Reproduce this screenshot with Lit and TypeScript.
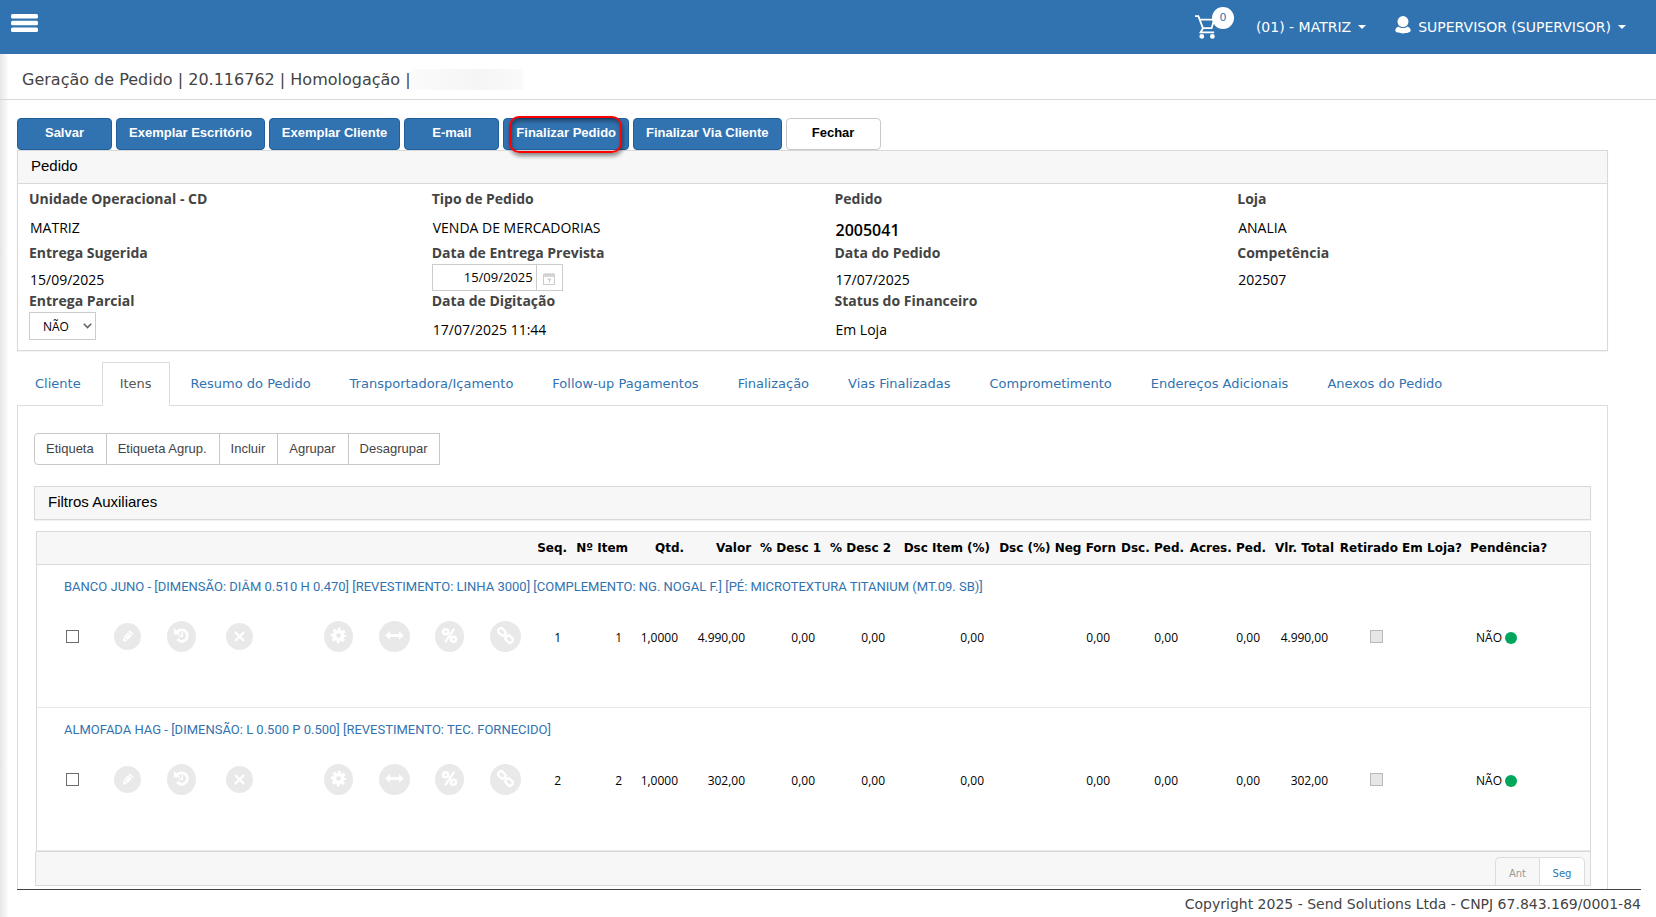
import { LitElement, html, css, svg, nothing } from "lit";
import { customElement } from "lit/decorators.js";
import { classMap } from "lit/directives/class-map.js";

const ACTIONS = [
  { label: "Salvar" },
  { label: "Exemplar Escritório" },
  { label: "Exemplar Cliente" },
  { label: "E-mail" },
  { label: "Finalizar Pedido", ring: true },
  { label: "Finalizar Via Cliente" },
  { label: "Fechar", plain: true },
];

const TABS = [
  "Cliente", "Itens", "Resumo do Pedido", "Transportadora/Içamento", "Follow-up Pagamentos",
  "Finalização", "Vias Finalizadas", "Comprometimento", "Endereços Adicionais", "Anexos do Pedido",
];

const TOOLS = ["Etiqueta", "Etiqueta Agrup.", "Incluir", "Agrupar", "Desagrupar"];

const HEADERS = [
  "Seq.", "Nº Item", "Qtd.", "Valor", "% Desc 1", "% Desc 2", "Dsc Item (%)",
  "Dsc (%) Neg Forn", "Dsc. Ped.", "Acres. Ped.", "Vlr. Total", "Retirado Em Loja?",
];

const ITEMS = [
  {
    title: "BANCO JUNO - [DIMENSÃO: DIÂM 0.510 H 0.470] [REVESTIMENTO: LINHA 3000] [COMPLEMENTO: NG. NOGAL F.] [PÉ: MICROTEXTURA TITANIUM (MT.09. SB)]",
    cells: ["1", "1", "1,0000", "4.990,00", "0,00", "0,00", "0,00", "0,00", "0,00", "0,00", "4.990,00"],
    pending: "NÃO",
  },
  {
    title: "ALMOFADA HAG - [DIMENSÃO: L 0.500 P 0.500] [REVESTIMENTO: TEC. FORNECIDO]",
    cells: ["2", "2", "1,0000", "302,00", "0,00", "0,00", "0,00", "0,00", "0,00", "0,00", "302,00"],
    pending: "NÃO",
  },
];

const COLUMN_WIDTHS = [63, 55, 53, 63, 34, 66, 47, 62, 50, 41, 61, 56, 67, 70, 70, 99, 126, 68, 82, 68, 128];

const GLYPHS = {
  edit: svg`<g transform="rotate(42 10 10)"><path d="M6.600 1.800h6.800v2.600H6.600zM6.600 5.400h6.800v8H6.600z" fill="#fff"/><path d="M6.600 14.400h6.800L10 19z" fill="#fff"/><path d="M9 6.400v6" stroke="#e9e9e9"/></g>`,
  history: svg`<path d="M5.2 5.6A6.7 6.7 0 1 1 5 14.400" fill="none" stroke="#fff" stroke-width="3.200"/><path d="M1 1v7.800h7.800z" fill="#fff"/><path d="M10.800 6v5H7" fill="none" stroke="#fff" stroke-width="1.800"/>`,
  remove: svg`<path d="M4 4l12 12M16 4l-12 12" stroke="#fff" stroke-width="3"/>`,
  gear: svg`<circle cx="10" cy="10" r="4.800" fill="none" stroke="#fff" stroke-width="4.200"/><circle cx="10" cy="10" r="7.600" fill="none" stroke="#fff" stroke-width="3" stroke-dasharray="3.370 2.600" stroke-dashoffset="1.680"/>`,
  width: svg`<path d="M4 10h12" stroke="#fff" stroke-width="3"/><path d="M.2 10l5-4.600v9.200zM19.800 10l-5-4.600v9.200z" fill="#fff"/>`,
  percent: svg`<circle cx="5.400" cy="5.600" r="3" fill="none" stroke="#fff" stroke-width="3"/><circle cx="14.600" cy="14.400" r="3" fill="none" stroke="#fff" stroke-width="3"/><path d="M15.600 2L4.800 18" stroke="#fff" stroke-width="2.600"/>`,
  link: svg`<g fill="none" stroke="#fff" stroke-width="2.800"><rect x="-4.400" y="-3.200" width="8.800" height="6.400" rx="2.400" transform="translate(5.700 5.700) rotate(45)"/><rect x="-4.400" y="-3.200" width="8.800" height="6.400" rx="2.400" transform="translate(14.300 14.300) rotate(45)"/><path d="M8 8l4 4"/></g>`,
};

const ROW_BUTTONS: { id: keyof typeof GLYPHS | null; label?: string; size?: string }[] = [
  { id: "edit", label: "Editar", size: "small" },
  { id: "history", label: "Histórico", size: "medium" },
  { id: "remove", label: "Excluir", size: "small" },
  { id: null },
  { id: "gear", label: "Configurar", size: "medium" },
  { id: "width", label: "Medidas", size: "large" },
  { id: "percent", label: "Desconto", size: "medium" },
  { id: "link", label: "Vincular", size: "large" },
];

@customElement("app-root")
class AppRoot extends LitElement {
  static styles = css`
    :host {
      display: flex;
      flex-direction: column;
      min-height: 100vh;
      box-sizing: border-box;
      background: #fff;
      color: #444;
      font-family: "DejaVu Sans", Verdana, sans-serif;
      font-size: 13px;
    }
    *, *::before, *::after { box-sizing: border-box; }
    button, input, select { font: inherit; margin: 0; }
    a { text-decoration: none; color: #3173b0; }
    svg { display: block; }

    .topbar {
      display: flex;
      align-items: center;
      height: 54px;
      padding: 0 30px 1px 11px;
      background: #3173b0;
      color: #fff;
      font-size: 14px;
    }
    .menu { padding: 0; border: 0; background: none; margin: 0 auto 7px 0; cursor: pointer; }
    .cart { position: relative; display: block; padding: 0; border: 0; background: none; margin-right: 40px; }
    .count {
      position: absolute; left: 17px; top: -8px; width: 22px; height: 22px; border-radius: 50%;
      background: #fff; color: #3173b0; font-size: 11px; line-height: 21px; text-align: center;
    }
    .drop {
      display: flex; align-items: center; gap: 7px; padding: 0; border: 0; background: none; color: #fff;
      margin-left: 29px;
    }
    .drop.first { margin-left: 0; }
    .caret { border: 4px solid transparent; border-top-color: #fff; border-bottom: 0; }

    .body {
      flex: 1;
      display: flex;
      flex-direction: column;
      background: linear-gradient(to right, #e6e6e6, #fff 9px);
    }
    .title {
      display: flex; align-items: center; height: 46px; padding: 6px 22px 0; margin: 0;
      border-bottom: 1px solid #d8d8d8; font-size: 16px; font-weight: 400; white-space: nowrap;
    }
    .redacted { width: 112px; height: 21px; background: linear-gradient(to right, #fbfbfb, #f5f5f5 60%, #fafafa); }

    .content { margin: 18px 48px 0 17px; }
    .actions { display: flex; gap: 4px; font: bold 13px/26px "Liberation Sans", Arial, sans-serif; }
    .action {
      position: relative; min-width: 95px; height: 32px; padding: 0 12px 3px; border: 1px solid #1f5f9c;
      border-radius: 4px; background: #3173b0; color: #fff;
    }
    .action.plain { background: #fff; color: #000; border-color: #c8c8c8; }
    .ring {
      position: absolute; inset: -3px 6px -4px 5px; border: 2px solid #f00; border-radius: 10px;
      box-shadow: 1px 3px 4px rgba(0, 0, 0, .45), inset 1px 3px 4px rgba(0, 0, 0, .4);
    }

    .panel { border: 1px solid #d9d9d9; background: #fff; box-shadow: 0 1px 1px rgba(0, 0, 0, .05); }
    .heading {
      margin: 0; padding: 0 13px 2px; background: #f7f7f7; color: #000;
      font: 15px/30px "Liberation Sans", Arial, sans-serif;
    }
    .fields {
      display: grid; grid-template-columns: 403fr 403fr 403fr 370fr; padding: 5px 0 5px 11px;
      border-top: 1px solid #d9d9d9; font-family: "Open Sans", "Trebuchet MS", sans-serif; font-size: 14px;
    }
    .name { display: block; font-weight: 700; line-height: 19px; }
    .value { display: block; padding: 5px 0 0 1px; line-height: 30px; color: #000; }
    .value.low { padding-top: 7px; line-height: 22px; }
    .value.big { padding-top: 9px; font-size: 16px; font-weight: 600; line-height: 26px; }
    .date { display: flex; margin-top: 2px; }
    .date input {
      width: 105px; height: 27px; padding: 0 3px 2px; border: 1px solid #ccc; text-align: right; color: #000;
      font-size: 13px; background: #fff;
    }
    .pick {
      display: grid; place-items: center; width: 26px; height: 27px; padding: 3px 0 0;
      border: 1px solid #ccc; border-left: 0; background: #fff;
    }
    .choice { display: grid; width: 67px; height: 28px; margin-top: 2px; }
    .choice > * { grid-area: 1 / 1; }
    .choice select {
      appearance: none; padding: 0 13px; border: 1px solid #ccc; border-radius: 0; background: #fff;
      color: #000; font-size: 12px;
    }
    .choice svg { justify-self: end; align-self: center; margin-right: 4px; pointer-events: none; }

    .tabs { display: flex; gap: 3px; margin-top: 11px; }
    .tab {
      padding: 0 17px; line-height: 42px; border: 1px solid transparent; border-bottom: 0;
      white-space: nowrap;
    }
    .tab.active { border-color: #ddd; background: #fff; color: #555; margin-bottom: -1px; }
    .pane { border: 1px solid #ddd; border-bottom: 0; padding: 27px 16px 3px; }

    .tools { display: flex; font: 13px "Liberation Sans", Arial, sans-serif; }
    .tool {
      height: 32px; padding: 0 12px 1px 11px; border: 1px solid #c8c8c8; border-left-width: 0; background: #fff; color: #444;
    }
    .tool:first-child { border-left-width: 1px; border-radius: 4px 0 0 4px; }
    .filters { margin: 21px 0 11px; }

    .items {
      width: calc(100% - 2px); margin-left: 2px; table-layout: fixed; border-collapse: separate; border-spacing: 0;
      border: 1px solid #d9d9d9; color: #000; font: 12px "Open Sans", "Trebuchet MS", sans-serif;
    }
    .items th {
      height: 33px; padding: 0 4px 0 0; background: #f7f7f7; border-bottom: 1px solid #d9d9d9;
      font: bold 12px "DejaVu Sans", Verdana, sans-serif; text-align: right; white-space: nowrap;
    }
    .items th.last { padding-left: 4px; text-align: left; }
    .items td { padding: 0; }
    .items .name-cell { height: 43px; padding-left: 27px; font: 13px Roboto, "Trebuchet MS", sans-serif; }
    .items .cell { height: 100px; padding-bottom: 43px; text-align: center; white-space: nowrap; }
    .items .num { padding-right: 10px; padding-top: 3px; text-align: right; }
    .items .select { padding-left: 29px; text-align: left; }
    .items .taken { padding-left: 32px; text-align: left; }
    .items .pending { padding-left: 10px; padding-top: 3px; text-align: left; }
    .items .split { border-bottom: 1px solid #e8e8e8; }
    .check {
      appearance: none; display: block; width: 13px; height: 13px; border: 1px solid #6b6b6b; background: #fff;
    }
    .check:disabled { border-color: #b9b9b9; background: #e6e6e6; }
    .dot { display: inline-block; width: 12px; height: 12px; margin-left: 3px; border-radius: 50%; background: #00a65a; vertical-align: -2px; }
    .round { display: inline-grid; place-items: center; padding: 0; border: 0; border-radius: 50%; background: #e9e9e9; vertical-align: middle; }
    .small { width: 27px; height: 27px; }
    .medium { width: 29px; height: 31px; padding-bottom: 2px; }
    .large { width: 31px; height: 31px; padding-bottom: 2px; }

    .pager {
      display: flex; justify-content: flex-end; height: 34px; margin-left: 1px; padding: 5px 5px 0;
      overflow: hidden; border: 1px solid #d9d9d9; border-top: 0; background: #f7f7f7; font-size: 10px;
    }
    .page { height: 32px; width: 46px; padding: 0; border: 1px solid #ddd; background: #fff; color: #3173b0; }
    .page.off { border-radius: 5px 0 0 5px; border-right: 0; width: 44px; background: #f7f7f7; color: #999; }
    .page.next { border-radius: 0 5px 5px 0; }

    .footer {
      margin: 0 15px 0 17px; padding-top: 4px; border-top: 1px solid #444; font-size: 14px; line-height: 20px;
      text-align: right;
    }
  `;

  private roundButton(b: (typeof ROW_BUTTONS)[number]) {
    if (!b.id) return nothing;
    const side = b.id === "width" ? 19 : b.size === "small" ? 15 : 17;
    return html`<button class="round ${b.size}" aria-label=${b.label ?? ""} disabled>
      <svg width=${side} height=${side} viewBox="0 0 20 20">${GLYPHS[b.id]}</svg>
    </button>`;
  }

  private field(name: string, value: string, extra = "") {
    return html`<div><span class="name">${name}</span><span class="value ${extra}">${value}</span></div>`;
  }

  private itemRows(item: (typeof ITEMS)[number]) {
    return html`
      <tr><td class="name-cell" colspan="22"><a href="#item-${item.cells[0]}">${item.title}</a></td></tr>
      <tr>
        <td class="cell select split"><input class="check" type="checkbox" aria-label="Selecionar item ${item.cells[0]}" /></td>
        ${ROW_BUTTONS.map((b) => html`<td class="cell split">${this.roundButton(b)}</td>`)}
        ${item.cells.map((c) => html`<td class="cell num split">${c}</td>`)}
        <td class="cell taken split"><input class="check" type="checkbox" disabled aria-label="Retirado em loja" /></td>
        <td class="cell pending split">${item.pending}<span class="dot"></span></td>
      </tr>`;
  }

  render() {
    return html`
      <header class="topbar">
        <button class="menu" aria-label="Menu">
          <svg width="27" height="18" viewBox="0 0 27 18" fill="#fff">
            <rect width="27" height="4.4" rx="1.5" /><rect y="6.8" width="27" height="4.4" rx="1.5" /><rect y="13.6" width="27" height="4.4" rx="1.5" />
          </svg>
        </button>
        <button class="cart" aria-label="Carrinho">
          <svg width="21" height="24" viewBox="0 0 21 24" fill="none" stroke="#fff" stroke-width="1.8">
            <path d="M0 1.2h3.4L8 13.4M4.6 4.6h14.6l-2.6 8.6H8L5.6 17.4h13.6" />
            <circle cx="6.8" cy="21.4" r="1.5" fill="#fff" /><circle cx="17.4" cy="21.4" r="1.5" fill="#fff" />
          </svg>
          <span class="count">0</span>
        </button>
        <button class="drop first">(01) - MATRIZ <span class="caret"></span></button>
        <button class="drop">
          <svg width="16" height="21" viewBox="0 0 16 21" fill="#fff">
            <circle cx="8" cy="5.6" r="5.5" /><path d="M.3 14.6c0-2 1.4-3.4 3.2-4.1 2.4 2.1 6.6 2.1 9 0 1.8.7 3.2 2.1 3.2 4.1 0 3.7-15.4 3.7-15.4 0z" />
          </svg>
          SUPERVISOR (SUPERVISOR) <span class="caret"></span>
        </button>
      </header>
      <div class="body">
        <h1 class="title">Geração de Pedido | 20.116762 | Homologação |<span class="redacted"></span></h1>
        <main class="content">
          <div class="actions">
            ${ACTIONS.map((a) => html`<button class=${classMap({ action: true, plain: !!a.plain })}>${a.label}${a.ring ? html`<span class="ring"></span>` : nothing}</button>`)}
          </div>
          <section class="panel">
            <h2 class="heading">Pedido</h2>
            <div class="fields">
              ${this.field("Unidade Operacional - CD", "MATRIZ")}
              ${this.field("Tipo de Pedido", "VENDA DE MERCADORIAS")}
              ${this.field("Pedido", "2005041", "big")}
              ${this.field("Loja", "ANALIA")}
              ${this.field("Entrega Sugerida", "15/09/2025", "low")}
              <div>
                <label class="name" for="due">Data de Entrega Prevista</label>
                <div class="date">
                  <input id="due" type="text" .value=${"15/09/2025"} />
                  <button class="pick" aria-label="Abrir calendário">
                    <svg width="12" height="12" viewBox="0 0 12 12">
                      <rect x=".5" y="1.5" width="11" height="10" fill="#fff" stroke="#ccc" />
                      <path d="M0 3h12M2.5 0v2M5 0v2M7.5 0v2M10 0v2" stroke="#ccc" stroke-width="1.5" />
                      <path d="M4.5 6h3L6 9.500" fill="none" stroke="#bbb" />
                    </svg>
                  </button>
                </div>
              </div>
              ${this.field("Data do Pedido", "17/07/2025", "low")}
              ${this.field("Competência", "202507", "low")}
              <div>
                <label class="name" for="partial">Entrega Parcial</label>
                <div class="choice">
                  <select id="partial"><option>NÃO</option><option>SIM</option></select>
                  <svg width="9" height="6" viewBox="0 0 9 6" fill="none" stroke="#666" stroke-width="1.6"><path d="M.8.8l3.7 3.7L8.2.8" /></svg>
                </div>
              </div>
              ${this.field("Data de Digitação", "17/07/2025 11:44")}
              ${this.field("Status do Financeiro", "Em Loja")}
            </div>
          </section>
          <nav class="tabs">
            ${TABS.map((t, i) => html`<a class=${classMap({ tab: true, active: i === 1 })} href="#tab-${i}">${t}</a>`)}
          </nav>
          <section class="pane">
            <div class="tools">${TOOLS.map((t) => html`<button class="tool">${t}</button>`)}</div>
            <div class="panel filters"><h2 class="heading">Filtros Auxiliares</h2></div>
            <table class="items">
              <colgroup>${COLUMN_WIDTHS.map((w) => html`<col width=${w} />`)}<col /></colgroup>
              <thead>
                <tr>
                  <th colspan="9"></th>
                  ${HEADERS.map((h) => html`<th>${h}</th>`)}
                  <th class="last">Pendência?</th>
                </tr>
              </thead>
              <tbody>${ITEMS.map((item) => this.itemRows(item))}</tbody>
            </table>
            <div class="pager">
              <button class="page off" disabled>Ant</button><button class="page next">Seg</button>
            </div>
          </section>
        </main>
        <footer class="footer">Copyright 2025 - Send Solutions Ltda - CNPJ 67.843.169/0001-84</footer>
      </div>
    `;
  }
}
